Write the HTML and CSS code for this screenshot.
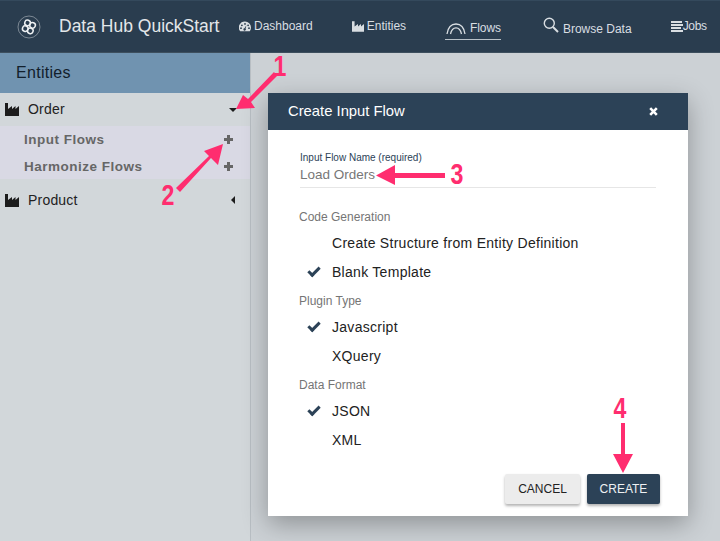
FILE: index.html

```html
<html>
<head>
  <meta charset="UTF-8">
  <title>Data Hub QuickStart</title>
  <link rel="stylesheet" href="styles.css">
</head>
<body>

<div class="topbar">
  <div class="brand">
    <svg class="logo" width="24" height="24" viewBox="0 0 24 24" fill="none" stroke="#eef1f3">
      <circle cx="12" cy="12" r="11" stroke-width="0.6" opacity="0.7"/>
      <g stroke-width="1.5" transform="rotate(20 12 12)">
        <circle cx="9.2" cy="8.6" r="2.8"/>
        <circle cx="14.8" cy="9.2" r="2.8"/>
        <circle cx="9" cy="14.8" r="2.8"/>
        <circle cx="14.6" cy="15.2" r="2.8"/>
      </g>
    </svg>
    <span class="brand-name">Data Hub QuickStart</span>
  </div>
  <div class="nav">
    <a class="nav-item nav-dash">
      <svg width="12" height="11" viewBox="0 0 12 11"><path fill="#d9dee2" fill-rule="evenodd" d="M6 .5a6 6 0 0 1 6 6c0 1.500-.4 2.800-1.200 3.800H1.200A6 6 0 0 1 6 .5zM6 2a.9.9 0 1 0 0 1.800A.9.9 0 0 0 6 2zM2.900 3.400a.9.9 0 1 0 0 1.800.9.9 0 0 0 0-1.800zM9.100 3.400a.9.9 0 1 0 0 1.800.9.9 0 0 0 0-1.800zM2 6.300a.9.9 0 1 0 0 1.800.9.9 0 0 0 0-1.800zM10 6.300a.9.9 0 1 0 0 1.800.9.9 0 0 0 0-1.800zM7.400 4.200 5.500 7.200a1.200 1.200 0 1 0 1.100.5z"/></svg>
      Dashboard
    </a>
    <a class="nav-item nav-ent">
      <svg width="12" height="11" viewBox="0 0 14 12"><path fill="#d9dee2" d="M0 0h3v6l4-3v3l3.500-3v3L14 3v9H0z"/></svg>
      Entities
    </a>
    <a class="nav-item nav-flows">
      <svg width="20" height="12" viewBox="0 0 20 12" fill="none" stroke="#d9dee2" stroke-width="1.300"><path d="M1 11C2 4.500 5.500 1 10 1s8 3.500 9 10"/><path d="M4.500 11C5.300 7 7.200 4.800 10 4.800s4.700 2.200 5.500 6.200"/></svg>
      Flows
    </a>
    <a class="nav-item nav-browse">
      <svg width="16" height="16" viewBox="0 0 16 16" fill="none" stroke="#d9dee2"><circle cx="6.300" cy="6.300" r="5" stroke-width="1.400"/><path d="M10 10l5 5" stroke-width="2"/></svg>
      Browse Data
    </a>
    <a class="nav-item nav-jobs">
      <svg width="12" height="11" viewBox="0 0 12 11"><path fill="#d9dee2" d="M0 0h11v2H0zM0 3h12v2H0zM0 6h10v2H0zM0 9h12v2H0z"/></svg><span>Jobs</span>
    </a>
  </div>
</div>

<div class="content">
  <div class="sidebar">
    <div class="side-title">Entities</div>
    <div class="entity">
      <svg class="factory" width="14" height="13" viewBox="0 0 14 13"><path fill="#1c1c1c" d="M0 0h3v6l4-3v3l3.500-3v3L14 3v10H0z"/></svg>
      <span class="entity-name">Order</span>
      <span class="caret-down"></span>
    </div>
    <div class="flow-list">
      <div class="flow-row"><span>Input Flows</span><span class="plus"></span></div>
      <div class="flow-row"><span>Harmonize Flows</span><span class="plus"></span></div>
    </div>
    <div class="entity entity-second">
      <svg class="factory" width="14" height="13" viewBox="0 0 14 13"><path fill="#1c1c1c" d="M0 0h3v6l4-3v3l3.500-3v3L14 3v10H0z"/></svg>
      <span class="entity-name">Product</span>
      <span class="caret-left"></span>
    </div>
  </div>
</div>

<div class="dialog">
  <div class="dialog-head">
    <span>Create Input Flow</span>
    <svg width="9" height="9" viewBox="0 0 9 9"><path d="M1.200 1.200l6.600 6.600M7.800 1.200L1.200 7.800" stroke="#fff" stroke-width="2.600"/></svg>
  </div>
  <div class="dialog-body">
    <div class="field">
      <div class="field-label">Input Flow Name (required)</div>
      <div class="field-value">Load Orders</div>
    </div>

    <div class="group-label first">Code Generation</div>
    <div class="option">Create Structure from Entity Definition</div>
    <div class="option checked">Blank Template</div>

    <div class="group-label">Plugin Type</div>
    <div class="option checked">Javascript</div>
    <div class="option">XQuery</div>

    <div class="group-label">Data Format</div>
    <div class="option checked">JSON</div>
    <div class="option">XML</div>

    <div class="actions">
      <button class="btn btn-cancel">CANCEL</button>
      <button class="btn btn-create">CREATE</button>
    </div>
  </div>
</div>

<!-- pink callouts drawn over the screenshot -->
<svg class="arrow" width="720" height="541" viewBox="0 0 720 541" fill="#ff2d6f" stroke="none">
  <path d="M277 76L251 102l4 6-19 1 7-14 5 4L274 72z"/>
  <path d="M180 192L211 158l7 7 5-21-19 7 5 5L176 188z"/>
  <path d="M445 173H395v-8l-19 10.500 19 9.500v-7h50z"/>
  <path d="M621 423v31h-8l10 19 10-19h-8v-31z"/>
</svg>
<span class="num num1">1</span>
<span class="num num2">2</span>
<span class="num num3">3</span>
<span class="num num4">4</span>

</body>
</html>
```

FILE: styles.css

```css
html, body {
  margin: 0;
  height: 541px;
  overflow: hidden;
}
body {
  background: #ccd1d5;
  font-family: "Liberation Sans", Arial, sans-serif;
  position: relative;
}

.topbar {
  height: 53px;
  box-sizing: border-box;
  background: #2a3d4f;
  border-top: 1px solid #34495c;
  border-bottom: 1px solid #3d4f5e;
  display: flex;
  align-items: center;
  color: #e3e7ea;
}
.brand {
  display: flex;
  align-items: center;
  padding-left: 17px;
  width: 239px;
  flex: none;
  box-sizing: border-box;
}
.logo { margin-right: 18px; flex: none; }
.brand-name { font-size: 17.500px; white-space: nowrap; }

.nav { display: flex; align-items: center; height: 100%; }
.nav-item {
  font-size: 12px;
  color: #d9dee2;
  display: flex;
  align-items: center;
  gap: 3px;
  white-space: nowrap;
}
.nav-dash { margin-right: 39px; margin-top: -1px; }
.nav-ent { margin-right: 39px; margin-top: -1px; }
.nav-flows {
  margin-right: 42px;
  padding: 0 0 4px 1px;
  border-bottom: 1px solid #b9c2c9;
  margin-top: 8px;
  gap: 4px;
  align-items: flex-end;
  letter-spacing: -0.1px;
}
.nav-browse { margin-right: 39px; gap: 4px; margin-top: 4px; }
.nav-browse svg { transform: translateY(-4px); }
.nav-jobs { gap: 0; margin-top: -1px; letter-spacing: -0.3px; }

.content { height: 488px; }
.sidebar {
  width: 250px;
  height: 100%;
  background: #d2d7da;
  border-right: 1px solid #b8bec3;
}
.side-title {
  height: 40px;
  background: #7093b0;
  color: #12202c;
  font-size: 16px;
  letter-spacing: 0.3px;
  line-height: 39px;
  padding-left: 16px;
}
.entity {
  height: 33px;
  box-sizing: border-box;
  padding: 0 13px 1px 5px;
  display: flex;
  align-items: center;
  font-size: 14px;
  color: #222;
  letter-spacing: 0.2px;
}
.entity-second { height: 42px; padding-bottom: 0; }
.entity-name { margin-left: 9px; flex: 1; }
.factory { flex: none; }
.caret-down {
  width: 0;
  height: 0;
  border-left: 4px solid transparent;
  border-right: 4px solid transparent;
  border-top: 4px solid #1c1c1c;
  margin-top: 2px;
}
.caret-left {
  width: 0;
  height: 0;
  border-top: 4px solid transparent;
  border-bottom: 4px solid transparent;
  border-right: 4px solid #1c1c1c;
  margin-right: 2px;
}

.flow-list {
  background: #d9d9e4;
  height: 53px;
  padding-left: 24px;
  padding-right: 17px;
}
.flow-row {
  height: 27px;
  display: flex;
  align-items: center;
  justify-content: space-between;
  font-size: 13.500px;
  font-weight: bold;
  color: #666;
  letter-spacing: 0.5px;
}
.plus {
  width: 9px;
  height: 9px;
  background:
    linear-gradient(#666, #666) center / 9px 3px no-repeat,
    linear-gradient(#666, #666) center / 3px 9px no-repeat;
}

.dialog {
  position: absolute;
  left: 268px;
  top: 93px;
  width: 420px;
  height: 423px;
  background: #fff;
  box-shadow: 0 8px 24px rgba(0, 0, 0, 0.3);
}
.dialog-head {
  height: 36px;
  padding: 0 30px 1px 20px;
  background: #2c4257;
  color: #fff;
  font-size: 14.800px;
  display: flex;
  align-items: center;
  justify-content: space-between;
}
.dialog-body { padding: 0 32px; }
.field {
  padding-top: 22px;
  height: 35px;
  border-bottom: 1px solid #e6e6e6;
}
.field-label { font-size: 10px; color: #2c4257; line-height: 12px; }
.field-value { font-size: 13.500px; color: #777; line-height: 19px; padding-top: 1px; }

.group-label {
  font-size: 12px;
  color: #757575;
  line-height: 14px;
  margin: 6.500px 0 5.500px -1px;
}
.group-label.first { margin-top: 22px; }
.option {
  height: 29px;
  line-height: 27px;
  padding-left: 32px;
  font-size: 14px;
  color: #222;
  letter-spacing: 0.28px;
  position: relative;
}
.option.checked::before {
  content: "";
  position: absolute;
  left: 8px;
  top: 8px;
  width: 9px;
  height: 4px;
  border-left: 3px solid #2c4257;
  border-bottom: 3px solid #2c4257;
  transform: rotate(-45deg);
}
.actions {
  display: flex;
  justify-content: flex-end;
  gap: 7px;
  margin-top: 18px;
  margin-right: -4px;
}
.btn {
  width: 75px;
  height: 30px;
  border: 0;
  border-radius: 2px;
  font-family: inherit;
  font-size: 12px;
  padding: 0;
  box-shadow: 0 2px 3px rgba(0, 0, 0, 0.3);
}
.btn-cancel { background: #ececec; color: #222; }
.btn-create { background: #2c4257; color: #eef1f3; width: 73px; }

.arrow { position: absolute; left: 0; top: 0; pointer-events: none; }
.num {
  position: absolute;
  color: #ff2d6f;
  font-weight: bold;
  font-size: 29px;
  line-height: 29px;
  transform: scaleX(0.8);
}
.num1 { left: 272px; top: 52px; }
.num2 { left: 160px; top: 181px; }
.num3 { left: 449px; top: 160px; }
.num4 { left: 612px; top: 394px; }
```
